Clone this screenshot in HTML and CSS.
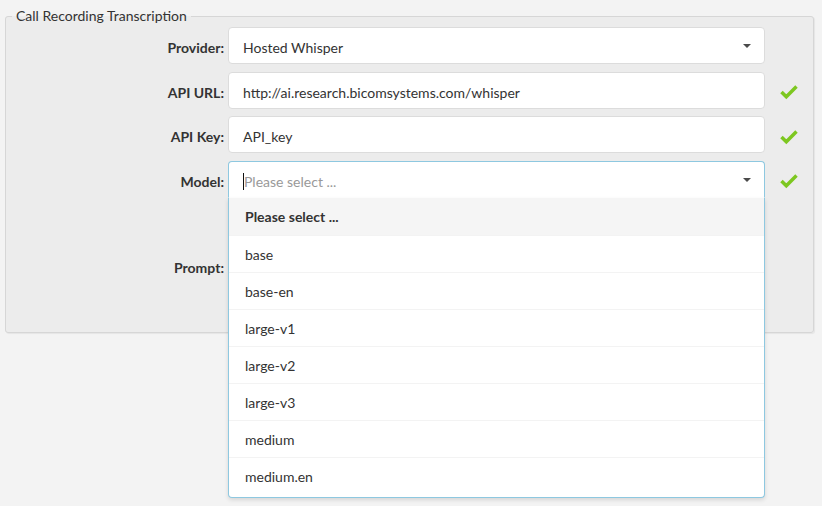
FILE: index.html
```html
<!DOCTYPE html>
<html lang="en">
<head>
  <meta charset="UTF-8">
  <title>Call Recording Transcription</title>
  <link rel="stylesheet" href="styles.css">
</head>
<body>
  <div class="page">
    <fieldset class="settings">
      <legend>Call Recording Transcription</legend>

      <div class="form-grid">
        <label class="field-label">Provider:</label>
        <div class="control select-box">
          <span>Hosted Whisper</span>
          <span class="caret"></span>
        </div>
        <span class="status"></span>

        <label class="field-label">API URL:</label>
        <div class="control">http://ai.research.bicomsystems.com/whisper</div>
        <span class="status">
          <svg width="20" height="16" viewBox="0 0 20 16"><polyline points="2.5,8 7.3,12.8 17.5,2.6" fill="none" stroke="#7dc720" stroke-width="3.5"/></svg>
        </span>

        <label class="field-label">API Key:</label>
        <div class="control">API_key</div>
        <span class="status">
          <svg width="20" height="16" viewBox="0 0 20 16"><polyline points="2.5,8 7.3,12.8 17.5,2.6" fill="none" stroke="#7dc720" stroke-width="3.5"/></svg>
        </span>

        <label class="field-label">Model:</label>
        <div class="model-wrap">
          <div class="control select-box open">
            <span class="cursor"></span><span class="placeholder">Please select ...</span>
            <span class="caret"></span>
          </div>
          <!-- open select list -->
          <ul class="dropdown">
            <li class="active">Please select ...</li>
            <li>base</li>
            <li>base-en</li>
            <li>large-v1</li>
            <li>large-v2</li>
            <li>large-v3</li>
            <li>medium</li>
            <li>medium.en</li>
          </ul>
        </div>
        <span class="status">
          <svg width="20" height="16" viewBox="0 0 20 16"><polyline points="2.5,8 7.3,12.8 17.5,2.6" fill="none" stroke="#7dc720" stroke-width="3.5"/></svg>
        </span>

        <label class="field-label">Prompt:</label>
        <textarea class="control prompt"></textarea>
        <span class="status"></span>
      </div>
    </fieldset>
  </div>
</body>
</html>
```

FILE: styles.css
```css
html, body {
  margin: 0;
  padding: 0;
  background: #ffffff;
}

body {
  font-family: Lato, "Open Sans", sans-serif;
  font-size: 14px;
  color: #333;
}

.page {
  width: 822px;
  height: 506px;
  background: #f3f3f3;
  padding: 8px 0 0 5px;
  box-sizing: border-box;
}

.settings {
  width: 804px;
  margin: 0;
  padding: 3px 0 6px 0;
  box-sizing: border-box;
  background: #ececec;
  border: 1px solid #d6d6d6;
  border-radius: 3px;
  box-shadow: 1px 1px 1px rgba(0, 0, 0, 0.06);
}

.settings legend {
  margin-left: 6px;
  padding: 0 4px 0 4px;
  font-size: 14px;
  line-height: 16px;
  color: #333;
}

.form-grid {
  display: grid;
  grid-template-columns: 218px 537px 44px;
  column-gap: 4px;
  row-gap: 7.67px;
  align-items: center;
}

.field-label {
  text-align: right;
  font-weight: bold;
  color: #333;
  padding-top: 4px;
}

.control {
  height: 37px;
  box-sizing: border-box;
  background: #fff;
  border: 1px solid #dcdcdc;
  border-radius: 4px;
  padding: 4px 14px 0 14px;
  display: flex;
  align-items: center;
  font-family: Lato, "Open Sans", sans-serif;
  font-size: 14px;
  color: #333;
}

.select-box {
  position: relative;
}

.caret {
  position: absolute;
  right: 13px;
  top: 16px;
  width: 0;
  height: 0;
  border-left: 4px solid transparent;
  border-right: 4px solid transparent;
  border-top: 4px solid #4a4a4a;
}

.status {
  display: flex;
  align-items: center;
  padding-left: 10px;
  padding-top: 4px;
  height: 37px;
  box-sizing: border-box;
}

.model-wrap {
  position: relative;
}

.select-box.open {
  border-color: #8ec8e0;
  border-bottom-color: transparent;
  border-radius: 4px 4px 0 0;
}

.cursor {
  display: inline-block;
  width: 1px;
  height: 17px;
  background: #111;
  margin-right: 0;
}

.placeholder {
  color: #999;
}

.dropdown {
  position: absolute;
  left: 0;
  top: 37px;
  width: 537px;
  box-sizing: border-box;
  margin: 0;
  padding: 0 0 3px 0;
  list-style: none;
  background: #fff;
  border: 1px solid #8ec8e0;
  border-top: none;
  border-radius: 0 0 4px 4px;
  box-shadow: 0 2px 4px rgba(0, 0, 0, 0.12);
  z-index: 5;
}

.dropdown li {
  height: 37px;
  line-height: 37px;
  padding-left: 16px;
  border-top: 1px solid #f3f3f3;
  box-sizing: border-box;
}

.dropdown li:first-child {
  border-top: none;
}

.dropdown li.active {
  background: #f5f5f5;
  font-weight: bold;
}

.prompt {
  height: 120px;
  resize: none;
}
```
